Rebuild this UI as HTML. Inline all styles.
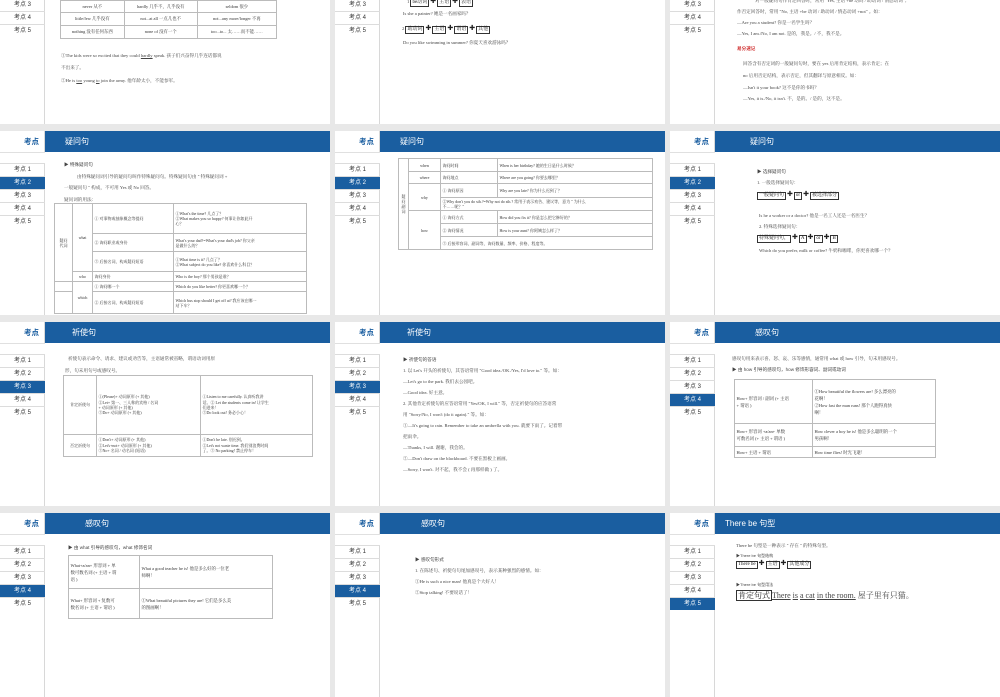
<!DOCTYPE html>
<html><head><meta charset="utf-8">
<style>
*{margin:0;padding:0;box-sizing:border-box}
body{width:1000px;height:600px;overflow:hidden;background:#e8e8e8;position:relative;font-family:"Liberation Serif","Noto Serif CJK SC",serif;color:#333}
.s{position:absolute;width:330px;height:184px;background:#fff;overflow:hidden}
.sb{position:absolute;left:0;top:0;width:45px;height:184px;border-right:1px solid #d8d8d8;background:#fff}
.sb .lab{position:absolute;right:5px;top:5px;font:bold 7.5px "Liberation Sans","Noto Sans CJK SC",sans-serif;color:#1a5ea0}
.sb .it{position:absolute;left:0;width:45px;height:13px;border-top:1px solid #dcdcdc;font:6px/12px "Liberation Sans","Noto Sans CJK SC",sans-serif;color:#333;text-align:center}
.sb .it.a{background:#1a5ea0;color:#fff}
.sb .bl{position:absolute;left:0;top:21px;width:45px;height:11px;border-top:1px solid #e0e0e0;background:#fff}
.hd{position:absolute;left:45px;top:0;width:285px;height:21px;background:#1a5ea0;color:#fff;font:8px/21px "Liberation Sans","Noto Sans CJK SC",sans-serif}
.t{position:absolute;font-size:4.6px;line-height:6px;white-space:nowrap;color:#444}
table{position:absolute;border-collapse:collapse;font-size:4.4px;line-height:5.6px;color:#333}
table.f{table-layout:fixed;font-size:4px;line-height:5px}
td{border:0.6px solid #bbb;padding:0 1.5px;vertical-align:middle;overflow:hidden}
.c{text-align:center}
.bx{display:inline-block;border:0.7px solid #333;padding:0 1px;font-size:5px;line-height:6px;color:#222}
.pl{display:inline-block;font:bold 7px/6px "DejaVu Sans",sans-serif;color:#222;margin:0 1px}
.sn{font-family:"Liberation Sans","Noto Sans CJK SC",sans-serif}
</style></head><body>

<!-- ROW 1 (top -60) -->
<div class="s" style="left:0;top:-60px">
 <div class="sb"><div class="lab">考点</div><div class="bl"></div>
 <div class="it a" style="top:32px">考点 1</div><div class="it" style="top:45px">考点 2</div><div class="it" style="top:58px">考点 3</div><div class="it" style="top:71px">考点 4</div><div class="it" style="top:84px">考点 5</div></div>
 <table style="left:60px;top:60px;width:217px">
  <tr style="height:12px"><td class="c">never 从不</td><td class="c">hardly 几乎不，几乎没有</td><td class="c">seldom 很少</td></tr>
  <tr style="height:13px"><td class="c">little/few 几乎没有</td><td class="c">not...at all 一点儿也不</td><td class="c">not...any more/longer 不再</td></tr>
  <tr style="height:13px"><td class="c">nothing 没有任何东西</td><td class="c">none of 没有一个</td><td class="c">too...to... 太……而不能……</td></tr>
 </table>
 <div class="t" style="left:61px;top:113px">①The kids were so excited that they could <u>hardly</u> speak. 孩子们兴奋得几乎连话都说</div>
 <div class="t" style="left:61px;top:125px">不出来了。</div>
 <div class="t" style="left:61px;top:138px">②He is <u>too</u> young <u>to</u> join the army. 他年龄太小，不能参军。</div>
</div>

<div class="s" style="left:335px;top:-60px">
 <div class="sb"><div class="lab">考点</div><div class="bl"></div>
 <div class="it" style="top:32px">考点 1</div><div class="it a" style="top:45px">考点 2</div><div class="it" style="top:58px">考点 3</div><div class="it" style="top:71px">考点 4</div><div class="it" style="top:84px">考点 5</div></div>
 <div class="t" style="left:72px;top:58px">1 <span class="bx">be动词</span><span class="pl">✚</span><span class="bx">主语</span><span class="pl">✚</span><span class="bx">表语</span></div>
 <div class="t" style="left:68px;top:71px">Is she a painter? 她是一名画家吗？</div>
 <div class="t" style="left:67px;top:85px">2 <span class="bx">助动词</span><span class="pl">✚</span><span class="bx">主语</span><span class="pl">✚</span><span class="bx">谓语</span><span class="pl">✚</span><span class="bx">其他</span></div>
 <div class="t" style="left:68px;top:100px">Do you like swimming in summer? 你夏天喜欢游泳吗？</div>
</div>

<div class="s" style="left:670px;top:-60px">
 <div class="sb"><div class="lab">考点</div><div class="bl"></div>
 <div class="it" style="top:32px">考点 1</div><div class="it a" style="top:45px">考点 2</div><div class="it" style="top:58px">考点 3</div><div class="it" style="top:71px">考点 4</div><div class="it" style="top:84px">考点 5</div></div>
 <div class="t" style="left:85px;top:58px">对一般疑问句作肯定回答时，常用 "Yes, 主语 +be 动词 / 助动词 / 情态动词"；</div>
 <div class="t" style="left:67px;top:69px">作否定回答时，常用 "No, 主语 +be 动词 / 助动词 / 情态动词 +not" 。如：</div>
 <div class="t" style="left:67px;top:80px">—Are you a student? 你是一名学生吗？</div>
 <div class="t" style="left:67px;top:91px">—Yes, I am./No, I am not. 是的，我是。/ 不，我不是。</div>
 <div class="t sn" style="left:67px;top:106px;color:#d03030;font-weight:bold">易分速记</div>
 <div class="t" style="left:73px;top:121px">回答含有否定词的一般疑问句时，要在 yes 后用肯定结构，表示肯定；在</div>
 <div class="t" style="left:73px;top:133px">no 后用否定结构，表示否定，但其翻译与原意相反。如：</div>
 <div class="t" style="left:73px;top:145px">—Isn't it your book? 这不是你的书吗？</div>
 <div class="t" style="left:73px;top:156px">—Yes, it is./No, it isn't. 不，是的。/ 是的，这不是。</div>
</div>

<!-- ROW 2 (top 131) -->
<div class="s" style="left:0;top:131px">
 <div class="sb"><div class="lab">考点</div><div class="bl"></div>
 <div class="it" style="top:32px">考点 1</div><div class="it a" style="top:45px">考点 2</div><div class="it" style="top:58px">考点 3</div><div class="it" style="top:71px">考点 4</div><div class="it" style="top:84px">考点 5</div></div>
 <div class="hd" style="padding-left:20px">疑问句</div>
 <div class="t sn" style="left:64px;top:31px">▶ 特殊疑问句</div>
 <div class="t" style="left:77px;top:43px">由特殊疑问词引导的疑问句叫作特殊疑问句。特殊疑问句由 " 特殊疑问词 +</div>
 <div class="t" style="left:64px;top:54px">一般疑问句 " 构成，不可用 Yes 或 No 回答。</div>
 <div class="t" style="left:64px;top:66px">疑问词的用法：</div>
 <table class="f" style="left:54px;top:72px;width:253px">
  <col style="width:18px"><col style="width:20px"><col style="width:81px"><col>
  <tr style="height:30px"><td rowspan="4" class="c">疑问<br>代词</td><td rowspan="3" class="c">what</td><td>① 对事物或抽象概念等提问</td><td>①What's the time? 几点了？<br>②What makes you so happy? 何事让你如此开<br>心？</td></tr>
  <tr style="height:18px"><td>② 询问职业或身份</td><td>What's your dad?=What's your dad's job? 你父亲<br>是做什么的？</td></tr>
  <tr style="height:20px"><td>③ 后接名词，构成疑问短语</td><td>①What time is it? 几点了？<br>②What subject do you like? 你喜欢什么科目？</td></tr>
  <tr style="height:10px"><td class="c">who</td><td>询问身份</td><td>Who is the boy? 那个男孩是谁？</td></tr>
  <tr style="height:10px"><td></td><td rowspan="2" class="c">which</td><td>① 询问哪一个</td><td>Which do you like better? 你更喜欢哪一个？</td></tr>
  <tr style="height:22px"><td></td><td>② 后接名词，构成疑问短语</td><td>Which bus stop should I get off at? 我应该在哪一<br>站下车？</td></tr>
 </table>
</div>

<div class="s" style="left:335px;top:131px">
 <div class="sb"><div class="lab">考点</div><div class="bl"></div>
 <div class="it" style="top:32px">考点 1</div><div class="it a" style="top:45px">考点 2</div><div class="it" style="top:58px">考点 3</div><div class="it" style="top:71px">考点 4</div><div class="it" style="top:84px">考点 5</div></div>
 <div class="hd" style="padding-left:20px">疑问句</div>
 <table class="f" style="left:63px;top:27px;width:255px">
  <col style="width:10px"><col style="width:32px"><col style="width:57px"><col>
  <tr style="height:13px"><td rowspan="7" class="c">疑问<br>副词</td><td class="c">when</td><td>询问时间</td><td>When is her birthday? 她的生日是什么时候？</td></tr>
  <tr style="height:12px"><td class="c">where</td><td>询问地点</td><td>Where are you going? 你要去哪里？</td></tr>
  <tr style="height:14px"><td rowspan="2" class="c">why</td><td>① 询问原因</td><td>Why are you late? 你为什么迟到了？</td></tr>
  <tr style="height:13px"><td colspan="2">②Why don't you do sth.?=Why not do sth.? 常用于表示劝告、建议等，意为 " 为什么<br>不……呢？"</td></tr>
  <tr style="height:13px"><td rowspan="3" class="c">how</td><td>① 询问方式</td><td>How did you fix it? 你是怎么把它修好的？</td></tr>
  <tr style="height:13px"><td>② 询问情况</td><td>How is your aunt? 你阿姨怎么样了？</td></tr>
  <tr style="height:13px"><td colspan="2">③ 后接形容词、副词等，询问数量、频率、价格、程度等。</td></tr>
 </table>
</div>

<div class="s" style="left:670px;top:131px">
 <div class="sb"><div class="lab">考点</div><div class="bl"></div>
 <div class="it" style="top:32px">考点 1</div><div class="it a" style="top:45px">考点 2</div><div class="it" style="top:58px">考点 3</div><div class="it" style="top:71px">考点 4</div><div class="it" style="top:84px">考点 5</div></div>
 <div class="hd" style="padding-left:35px">疑问句</div>
 <div class="t sn" style="left:87px;top:38px">▶ 选择疑问句</div>
 <div class="t" style="left:87px;top:49px">1. 一般选择疑问句：</div>
 <div class="t" style="left:87px;top:60px"><span class="bx">一般疑问句</span><span class="pl">✚</span><span class="bx">or</span><span class="pl">✚</span><span class="bx">被选择部分</span></div>
 <div class="t" style="left:89px;top:82px">Is he a worker or a doctor? 他是一名工人还是一名医生？</div>
 <div class="t" style="left:89px;top:93px">2. 特殊选择疑问句：</div>
 <div class="t" style="left:87px;top:103px"><span class="bx">特殊疑问句，</span><span class="pl">✚</span><span class="bx">A</span><span class="pl">✚</span><span class="bx">or</span><span class="pl">✚</span><span class="bx">B</span></div>
 <div class="t" style="left:89px;top:117px">Which do you prefer, milk or coffee? 牛奶和咖啡，你更喜欢哪一个？</div>
</div>

<!-- ROW 3 (top 322) -->
<div class="s" style="left:0;top:322px">
 <div class="sb"><div class="lab">考点</div><div class="bl"></div>
 <div class="it" style="top:32px">考点 1</div><div class="it" style="top:45px">考点 2</div><div class="it a" style="top:58px">考点 3</div><div class="it" style="top:71px">考点 4</div><div class="it" style="top:84px">考点 5</div></div>
 <div class="hd" style="padding-left:27px">祈使句</div>
 <div class="t" style="left:68px;top:34px">祈使句表示命令、请求、建议或劝告等，主语通常被省略，谓语动词用原</div>
 <div class="t" style="left:65px;top:46px">形，句末用句号或感叹号。</div>
 <table class="f" style="left:63px;top:53px;width:250px;line-height:5.4px">
  <col style="width:33px"><col style="width:104px"><col>
  <tr style="height:59px"><td class="c">肯定祈使句</td><td>①(Please)+ 动词原形 (+ 其他)<br>②Let+ 第一、三人称的宾格 / 名词<br>+ 动词原形 (+ 其他)<br>③Do+ 动词原形 (+ 其他)</td><td>①Listen to me carefully. 认真听我讲<br>话。② Let the students come in! 让学生<br>们进来！<br>③Do look out! 务必小心！</td></tr>
  <tr style="height:22px"><td class="c">否定祈使句</td><td>①Don't+ 动词原形 (+ 其他)<br>②Let's+not+ 动词原形 (+ 其他)<br>③No+ 名词 / 动名词 (短语)</td><td>①Don't be late. 别迟到。<br>②Let's not waste time. 我们别浪费时间<br>了。③ No parking! 禁止停车！</td></tr>
 </table>
</div>

<div class="s" style="left:335px;top:322px">
 <div class="sb"><div class="lab">考点</div><div class="bl"></div>
 <div class="it" style="top:32px">考点 1</div><div class="it" style="top:45px">考点 2</div><div class="it a" style="top:58px">考点 3</div><div class="it" style="top:71px">考点 4</div><div class="it" style="top:84px">考点 5</div></div>
 <div class="hd" style="padding-left:27px">祈使句</div>
 <div class="t sn" style="left:68px;top:35px">▶ 祈使句的答语</div>
 <div class="t" style="left:68px;top:46px">1. 以 Let's 开头的祈使句，其答语常用 "Good idea./OK./Yes, I'd love to." 等。如：</div>
 <div class="t" style="left:68px;top:57px">—Let's go to the park. 我们去公园吧。</div>
 <div class="t" style="left:68px;top:68px">—Good idea. 好主意。</div>
 <div class="t" style="left:68px;top:79px">2. 其他肯定祈使句的应答语常用 "Yes/OK, I will." 等，否定祈使句的应答语常</div>
 <div class="t" style="left:68px;top:90px">用 "Sorry/No, I won't (do it again)." 等。如：</div>
 <div class="t" style="left:68px;top:101px">①—It's going to rain. Remember to take an umbrella with you. 就要下雨了。记着带</div>
 <div class="t" style="left:68px;top:112px">把雨伞。</div>
 <div class="t" style="left:68px;top:123px">—Thanks, I will. 谢谢，我会的。</div>
 <div class="t" style="left:68px;top:134px">②—Don't draw on the blackboard. 不要在黑板上画画。</div>
 <div class="t" style="left:68px;top:145px">—Sorry, I won't. 对不起，我不会 ( 再那样做 ) 了。</div>
</div>

<div class="s" style="left:670px;top:322px">
 <div class="sb"><div class="lab">考点</div><div class="bl"></div>
 <div class="it" style="top:32px">考点 1</div><div class="it" style="top:45px">考点 2</div><div class="it" style="top:58px">考点 3</div><div class="it a" style="top:71px">考点 4</div><div class="it" style="top:84px">考点 5</div></div>
 <div class="hd" style="padding-left:40px">感叹句</div>
 <div class="t" style="left:62px;top:34px">感叹句用来表示喜、怒、哀、乐等感情，通常用 what 或 how 引导，句末用感叹号。</div>
 <div class="t sn" style="left:62px;top:45px">▶ 由 how 引导的感叹句，how 修饰形容词、副词或动词</div>
 <table class="f" style="left:64px;top:57px;width:202px;font-size:4.4px;line-height:7px">
  <col style="width:78px"><col>
  <tr style="height:44px"><td>How+ 形容词 / 副词 (+ 主语<br>+ 谓语 )</td><td>①How beautiful the flowers are! 多么漂亮的<br>花啊！<br>②How fast the man runs! 那个人跑得真快<br>啊！</td></tr>
  <tr style="height:23px"><td>How+ 形容词 +a/an+ 单数<br>可数名词 (+ 主语 + 谓语 )</td><td>How clever a boy he is! 他是多么聪明的一个<br>男孩啊！</td></tr>
  <tr style="height:11px"><td>How+ 主语 + 谓语</td><td>How time flies! 时光飞逝！</td></tr>
 </table>
</div>

<!-- ROW 4 (top 513) -->
<div class="s" style="left:0;top:513px">
 <div class="sb"><div class="lab">考点</div><div class="bl"></div>
 <div class="it" style="top:32px">考点 1</div><div class="it" style="top:45px">考点 2</div><div class="it" style="top:58px">考点 3</div><div class="it a" style="top:71px">考点 4</div><div class="it" style="top:84px">考点 5</div></div>
 <div class="hd" style="padding-left:40px">感叹句</div>
 <div class="t sn" style="left:68px;top:32px">▶ 由 what 引导的感叹句，what 修饰名词</div>
 <table class="f" style="left:68px;top:42px;width:205px;font-size:4.4px;line-height:7px">
  <col style="width:71px"><col>
  <tr style="height:33px"><td>What+a/an+ 形容词 + 单<br>数可数名词 (+ 主语 + 谓<br>语 )</td><td>What a good teacher he is! 他是多么好的一位老<br>师啊！</td></tr>
  <tr style="height:30px"><td>What+ 形容词 + 复数可<br>数名词 (+ 主语 + 谓语 )</td><td>①What beautiful pictures they are! 它们是多么美<br>的图画啊！</td></tr>
 </table>
</div>

<div class="s" style="left:335px;top:513px">
 <div class="sb"><div class="lab">考点</div><div class="bl"></div>
 <div class="it" style="top:32px">考点 1</div><div class="it" style="top:45px">考点 2</div><div class="it" style="top:58px">考点 3</div><div class="it a" style="top:71px">考点 4</div><div class="it" style="top:84px">考点 5</div></div>
 <div class="hd" style="padding-left:41px">感叹句</div>
 <div class="t sn" style="left:80px;top:44px">▶ 感叹句形式</div>
 <div class="t" style="left:80px;top:55px">1. 在陈述句、祈使句句尾加感叹号，表示某种强烈的感情。如：</div>
 <div class="t" style="left:80px;top:66px">①He is such a nice man! 他真是个大好人！</div>
 <div class="t" style="left:80px;top:77px">②Stop talking! 不要说话了！</div>
</div>

<div class="s" style="left:670px;top:513px">
 <div class="sb"><div class="lab">考点</div><div class="bl"></div>
 <div class="it" style="top:32px">考点 1</div><div class="it" style="top:45px">考点 2</div><div class="it" style="top:58px">考点 3</div><div class="it" style="top:71px">考点 4</div><div class="it a" style="top:84px">考点 5</div></div>
 <div class="hd" style="padding-left:10px">There be 句型</div>
 <div class="t" style="left:66px;top:30px">There be 句型是一种表示 " 存在 " 的特殊句型。</div>
 <div class="t sn" style="left:66px;top:40px;font-size:4px">▶There be 句型结构</div>
 <div class="t" style="left:66px;top:47px"><span class="bx">There be</span><span class="pl">✚</span><span class="bx">主语</span><span class="pl">✚</span><span class="bx">其他成分</span></div>
 <div class="t sn" style="left:66px;top:69px;font-size:4px">▶There be 句型用法</div>
 <div class="t" style="left:66px;top:77px;font-size:8px;line-height:9px"><span class="bx" style="font-size:8px;line-height:9px">肯定句式</span><u>There</u> <u>is</u> <u>a cat</u> <u>in the room.</u> 屋子里有只猫。</div>
</div>

</body></html>
